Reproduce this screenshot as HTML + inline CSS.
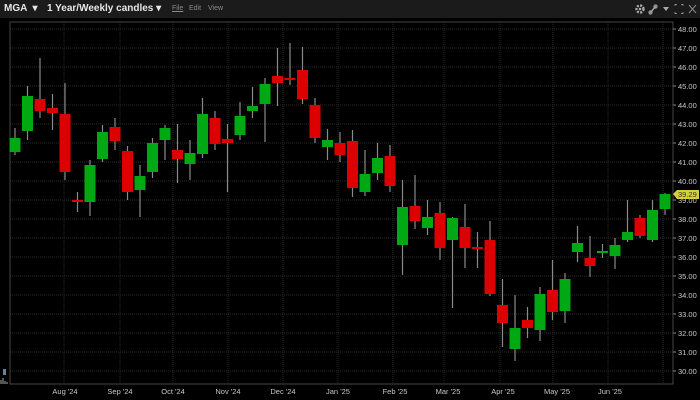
<!DOCTYPE html>
<html><head><style>
body{margin:0;width:700px;height:400px;background:#000;overflow:hidden;font-family:"Liberation Sans",sans-serif}
#top{position:absolute;left:0;top:0;width:700px;height:18px;background:#1b1b1b}
.t{position:absolute;color:#e6e6e6;font-weight:bold;font-size:10px;top:3px}
.m{position:absolute;color:#8a8a8a;font-size:7px;top:5px}
</style></head><body>
<div id="top">
<span class="t" style="left:4px">MGA &nbsp;▾</span>
<span class="t" style="left:47px">1 Year/Weekly candles ▾</span>
<span class="m" style="left:172px;text-decoration:underline">File</span>
<span class="m" style="left:189px">Edit</span>
<span class="m" style="left:208px">View</span>
<svg style="position:absolute;left:630px;top:2px" width="70" height="14">
<circle cx="10" cy="7" r="3.5" fill="none" stroke="#aaa" stroke-width="2.4" stroke-dasharray="2 1.3"/><circle cx="10" cy="7" r="1.3" fill="#aaa"/>
<path d="M20 11 L26 4" stroke="#9a9" stroke-width="1.5" fill="none"/><circle cx="20.5" cy="10.5" r="1.6" fill="none" stroke="#aaa"/><circle cx="25.5" cy="4.5" r="1.6" fill="none" stroke="#aaa"/>
<path d="M33 5h6l-3 4z" fill="#aaa"/>
<path d="M45 4v-1.5h2M51 2.5h2v1.5M53 10v1.5h-2M47 11.5h-2v-1.5" stroke="#888" fill="none"/>
<path d="M59 3l7 8M66 3l-7 8" stroke="#888"/>
</svg>
</div>
<svg id="c" style="position:absolute;left:0;top:0" width="700" height="400"></svg>
<script>
var s='',i;
for(i=0;i<=18;i++){var y=29+i*19;s+='<line x1="10" x2="673" y1="'+y+'" y2="'+y+'" stroke="#2a2a2a" stroke-dasharray="1 1"/>';
s+='<line x1="673" x2="676" y1="'+y+'" y2="'+y+'" stroke="#888"/>';
s+='<text x="678" y="'+(y+3)+'" fill="#c8c8c8" font-size="7.5" font-family="Liberation Sans">'+(48-i)+'.00</text>';}
[64,120,173,228,283,338,393,444,500,553,608,663].forEach(function(x){s+='<line x1="'+x+'" x2="'+x+'" y1="22" y2="384" stroke="#2a2a2a" stroke-dasharray="1 1"/>';});
s+='<rect x="10" y="22" width="663" height="362" fill="none" stroke="#555" stroke-width="0.8"/>';
var m=[["Aug '24",65],["Sep '24",120],["Oct '24",173],["Nov '24",228],["Dec '24",283],["Jan '25",338],["Feb '25",395],["Mar '25",448],["Apr '25",503],["May '25",557],["Jun '25",610]];
m.forEach(function(a){s+='<text x="'+a[1]+'" y="394" fill="#c8c8c8" font-size="7.5" text-anchor="middle" font-family="Liberation Sans">'+a[0]+'</text>';});
var d=[[138,152,128,155,1],[96,131,86,140,1],[99,111,58,118,0],[108,113,94,130,0],[114,172,83,180,0],[200,202,192,212,0],[165,202,160,216,1],[132,159,125,162,1],[127,141,118,150,0],[151,192,146,200,0],[176,190,165,217,1],[143,172,138,178,1],[128,140,125,160,1],[150,159,124,183,0],[153,164,140,180,1],[114,154,98,158,1],[118,144,111,150,0],[139,143,124,192,0],[116,135,102,140,1],[106,111,87,118,1],[84,104,78,142,1],[76,83,48,106,0],[78,80,43,85,0],[70,99,47,104,0],[105,138,98,143,0],[140,147,129,160,1],[143,155,132,162,0],[141,188,130,197,0],[174,192,150,196,1],[158,173,143,180,1],[156,186,145,192,0],[207,245,180,275,1],[206,221,175,229,0],[217,228,200,235,1],[213,248,202,260,0],[218,240,217,308,1],[227,248,204,268,0],[247,248,232,268,0],[240,294,221,296,0],[305,323,279,347,0],[328,349,295,361,1],[320,328,307,338,0],[294,330,287,341,1],[290,312,260,320,0],[279,311,273,323,1],[243,252,226,262,1],[258,266,236,277,0],[251,253,244,258,1],[245,256,238,269,1],[232,240,200,242,1],[218,236,215,238,0],[210,240,200,242,1],[194,209,193,215,1]];
d.forEach(function(c,k){var x=15+k*12.5;
s+='<line x1="'+x+'" x2="'+x+'" y1="'+c[2]+'" y2="'+c[3]+'" stroke="#8a8a8a" stroke-width="1.2"/>';
s+='<rect x="'+(x-5.5)+'" y="'+c[0]+'" width="11" height="'+Math.max(2,c[1]-c[0])+'" fill="'+(c[4]?'#00a814':'#dd0000')+'"/>';});
s+='<path d="M673 194l4 -4h22v9h-22z" fill="#d6cf3a"/><text x="678" y="197" fill="#333" font-size="7.5" font-family="Liberation Sans">39.29</text>';
s+='<rect x="3" y="369" width="3" height="6" fill="#58a"/><path d="M1 384v-4M3 384v-6M5 384v-3M7 384v-2" stroke="#aaa"/>';
document.getElementById('c').innerHTML=s;
</script>
</body></html>
